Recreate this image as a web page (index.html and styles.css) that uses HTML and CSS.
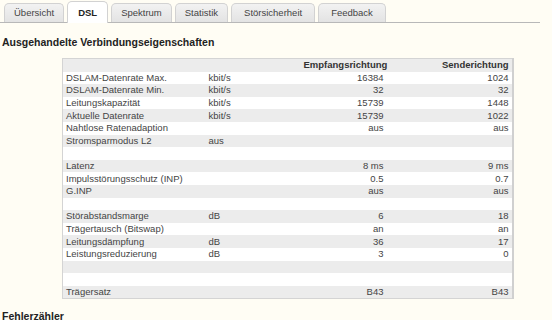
FILE: index.html
```html
<!DOCTYPE html>
<html lang="de">
<head>
  <meta charset="UTF-8" />
  <title>DSL</title>
  <link rel="stylesheet" href="styles.css">
</head>
<body>

<div class="tabs">
    <a class="tab">Übersicht</a>
    <a class="tab active">DSL</a>
    <a class="tab">Spektrum</a>
    <a class="tab">Statistik</a>
    <a class="tab wide">Störsicherheit</a>
    <a class="tab wide">Feedback</a>
</div>

<h2 class="section-title">Ausgehandelte Verbindungseigenschaften</h2>

<table class="data">
    <colgroup>
        <col class="c-label"><col class="c-unit"><col class="c-down"><col class="c-up">
    </colgroup>
    <thead>
        <tr><th></th><th></th><th class="num">Empfangsrichtung</th><th class="num">Senderichtung</th></tr>
    </thead>
    <tbody>
        <tr><td>DSLAM-Datenrate Max.</td><td>kbit/s</td><td class="num">16384</td><td class="num">1024</td></tr>
        <tr><td>DSLAM-Datenrate Min.</td><td>kbit/s</td><td class="num">32</td><td class="num">32</td></tr>
        <tr><td>Leitungskapazität</td><td>kbit/s</td><td class="num">15739</td><td class="num">1448</td></tr>
        <tr><td>Aktuelle Datenrate</td><td>kbit/s</td><td class="num">15739</td><td class="num">1022</td></tr>
        <tr><td>Nahtlose Ratenadaption</td><td></td><td class="num">aus</td><td class="num">aus</td></tr>
        <tr><td>Stromsparmodus L2</td><td>aus</td><td></td><td></td></tr>
        <tr><td></td><td></td><td></td><td></td></tr>
        <tr><td>Latenz</td><td></td><td class="num">8 ms</td><td class="num">9 ms</td></tr>
        <tr><td>Impulsstörungsschutz (INP)</td><td></td><td class="num">0.5</td><td class="num">0.7</td></tr>
        <tr><td>G.INP</td><td></td><td class="num">aus</td><td class="num">aus</td></tr>
        <tr><td></td><td></td><td></td><td></td></tr>
        <tr><td>Störabstandsmarge</td><td>dB</td><td class="num">6</td><td class="num">18</td></tr>
        <tr><td>Trägertausch (Bitswap)</td><td></td><td class="num">an</td><td class="num">an</td></tr>
        <tr><td>Leitungsdämpfung</td><td>dB</td><td class="num">36</td><td class="num">17</td></tr>
        <tr><td>Leistungsreduzierung</td><td>dB</td><td class="num">3</td><td class="num">0</td></tr>
        <tr><td></td><td></td><td></td><td></td></tr>
        <tr><td></td><td></td><td></td><td></td></tr>
        <tr><td>Trägersatz</td><td></td><td class="num">B43</td><td class="num">B43</td></tr>
    </tbody>
</table>

<h2 class="section-title next">Fehlerzähler</h2>

</body>
</html>
```

FILE: styles.css
```css
body {
    font-family: "Liberation Sans", Arial, sans-serif;
    font-size: 9.5px;
    color: #444;
    background-color: #fffdf4;
    margin: 0;
    padding: 0;
}

.tabs {
    display: flex;
    gap: 3px;
    padding: 2px 0 0 4px;
    margin-right: 12px;
    height: 20px;
    border-bottom: 1px solid #b8b8b8;
    align-items: flex-end;
}

.tab {
    display: block;
    height: 18px;
    line-height: 18px;
    padding: 0 9px;
    text-align: center;
    background: linear-gradient(#f2f2f2, #e3e3e3);
    border: 1px solid #d2d2d2;
    border-bottom: none;
    border-radius: 5px 5px 0 0;
    color: #444;
}

.tab.wide {
    padding: 0 12px;
}

.tab.active {
    background: #fff;
    font-weight: bold;
    color: #222;
    height: 21px;
    line-height: 22px;
    margin-bottom: -1px;
    padding: 0 10px;
}

.section-title {
    font-size: 10.5px;
    font-weight: bold;
    margin: 13px 0 10px 2px;
    color: #222;
}

.section-title.next {
    margin-top: 11px;
}

.data {
    margin-left: 62px;
    width: 450px;
    table-layout: fixed;
    border-collapse: collapse;
    border: 1px solid #d4d4d4;
    border-right: 2px solid #d0d0d0;
    background: #fff;
}

.c-label { width: 143px; }
.c-unit { width: 95px; }
.c-down { width: 86px; }
.c-up { width: 126px; }

.data th,
.data td {
    height: 12.6px;
    padding: 0 3px;
    text-align: left;
    white-space: nowrap;
    line-height: 12px;
}

.data th {
    font-weight: bold;
    color: #333;
}

.data thead tr {
    background: #ececec;
}

.data tbody tr:nth-child(odd) {
    background: #fff;
}

.data tbody tr:nth-child(even) {
    background: #ececec;
}

.data .num {
    text-align: right;
}
```
